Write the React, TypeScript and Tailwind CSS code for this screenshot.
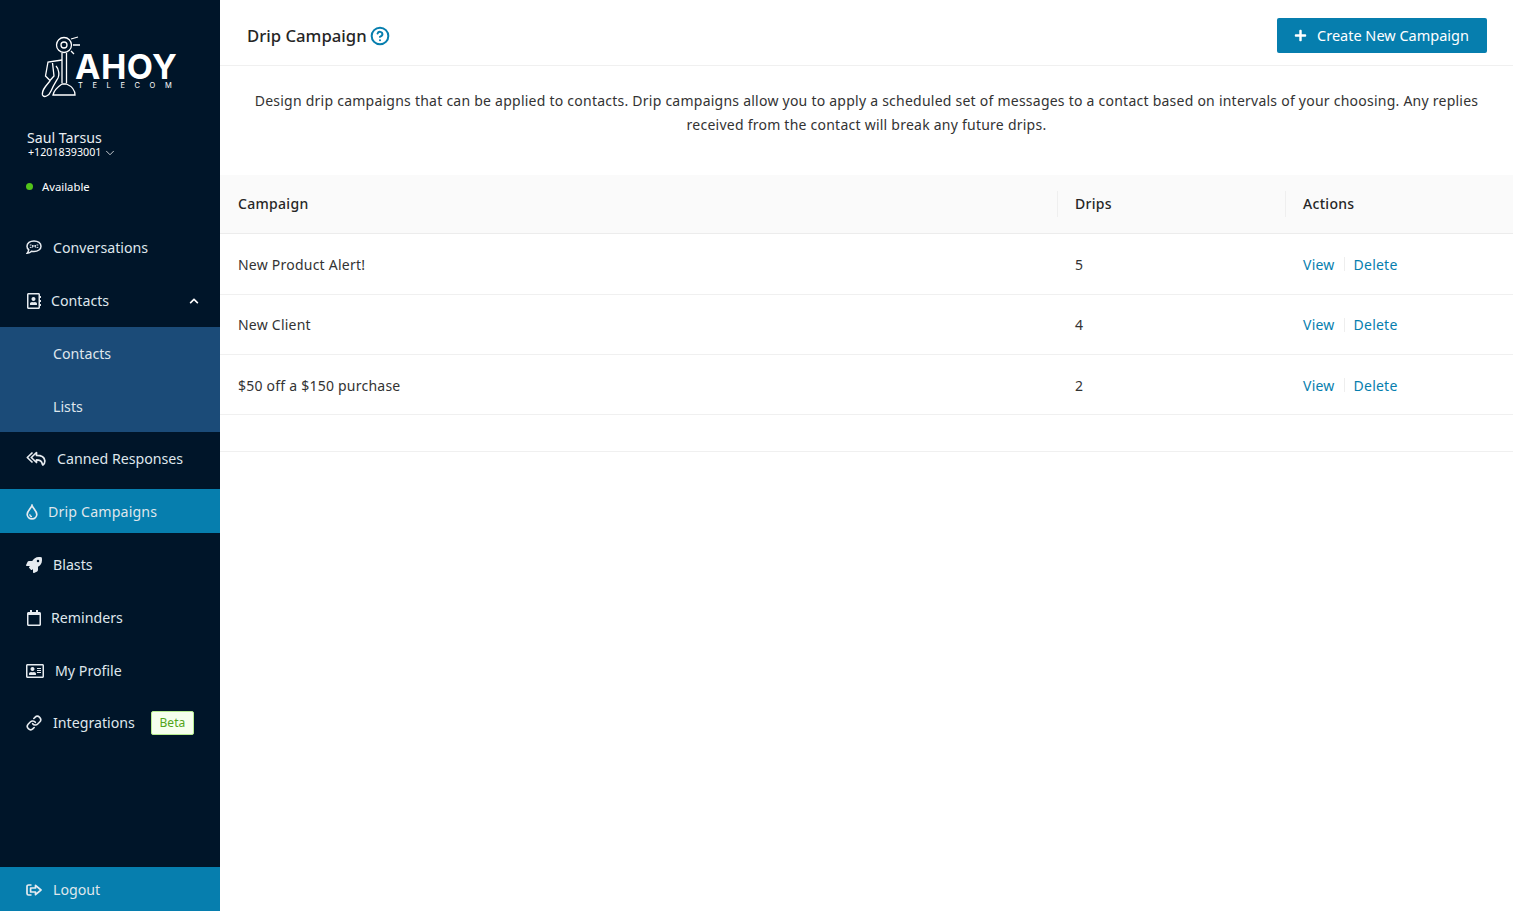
import { ReactNode } from "react";
import {
  FaRegAddressBook,
  FaRocket,
  FaRegCalendar,
  FaRegAddressCard,
  FaChevronUp,
  FaPlus,
} from "react-icons/fa";
import { ChevronDown, CircleHelp, Link } from "lucide-react";

const font = { fontFamily: '"Noto Sans", "Open Sans", sans-serif' };

function SmsIcon() {
  return (
    <svg width="16" height="15" viewBox="0 0 16 15" fill="none" stroke="currentColor">
      <path d="M8 1C4 1 1 3.2 1 6.2C1 7.6 1.6 8.8 2.7 9.7C2.6 11 2 12.2 1.2 13.2C3 13.2 4.6 12.4 5.6 11.3C6.3 11.4 7.1 11.5 8 11.5C12 11.5 15 9.2 15 6.2C15 3.2 12 1 8 1Z" strokeWidth="1.5" />
      <path d="M3.8 5H5.5M3.8 7.4H5.5M6.6 7.6V5L8 6.6L9.4 5V7.6M10.6 5H12.3M10.6 7.4H12.3" strokeWidth="1" />
    </svg>
  );
}

function CannedIcon() {
  return (
    <svg width="20" height="15" viewBox="0 0 20 15" fill="none" stroke="currentColor" strokeWidth="1.7" strokeLinejoin="round">
      <path d="M6.5 1.5L1.3 6.5L6.5 11.5" />
      <path d="M10.5 1.5L5.3 6.5L10.5 11.5V8.8C13.5 8.8 15.5 9.6 16 12C16.2 13 16.5 13.6 17 14C18.3 12.8 19 11.2 18.8 9.6C18.4 6.2 15 4.4 10.5 4.4V1.5Z" />
    </svg>
  );
}

function DropIcon() {
  return (
    <svg width="12" height="16" viewBox="0 0 12 16" fill="none" stroke="currentColor">
      <path d="M6 1.5C6.8 4 10.8 7 10.8 10.3C10.8 13 8.6 14.9 6 14.9C3.4 14.9 1.2 13 1.2 10.3C1.2 7 5.2 4 6 1.5Z" strokeWidth="1.7" />
      <path d="M3.8 10.2C3.8 11.6 4.7 12.6 6 12.7" strokeWidth="1.2" />
    </svg>
  );
}

function LogoutIcon() {
  return (
    <svg width="16" height="12" viewBox="0 0 16 12" fill="none" stroke="currentColor" strokeWidth="1.7">
      <path d="M5.5 1H2.6C1.6 1 1 1.7 1 2.6V9.4C1 10.3 1.6 11 2.6 11H5.5" />
      <path d="M9.5 1.4L15 6L9.5 10.6V8H4.6V4H9.5V1.4Z" strokeLinejoin="round" />
    </svg>
  );
}

function Logo() {
  return (
    <div className="relative h-[70px] w-[140px]">
      <svg className="absolute left-0 top-0" width="46" height="62" viewBox="0 0 46 62" fill="none" stroke="white" strokeWidth="1.3">
        <circle cx="23" cy="9" r="7.5" />
        <circle cx="23" cy="9" r="3" />
        <path d="M21 17V47M25.5 17V47" />
        <path d="M21 24L7 26L4.5 40L9 44.5L13 40L11.5 27" />
        <path d="M9 45C5 50 0.5 54 1.5 59C3 62 8 60 10 55C12 50 14 47 17 42C18.5 39 18 33 15 30" />
        <path d="M12 59C13 54 18 50 21 48H25.5C30 50 34 54 34 59H12Z" />
        <path d="M30 3L37 1M32 9H39M30 15L33 18" />
      </svg>
      <span className="absolute left-[34px] top-[17px] text-[34px] leading-[28px] font-bold tracking-[0.5px] text-white" style={{ fontFamily: "Inter, sans-serif" }}>
        AHOY
      </span>
      <span className="absolute left-[37px] top-[45px] text-[7.5px] leading-[10px] tracking-[9.6px] text-white whitespace-nowrap" style={{ fontFamily: "Inter, sans-serif" }}>
        TELECOM
      </span>
    </div>
  );
}

function NavItem({
  icon,
  label,
  gap,
  extra,
}: {
  icon: ReactNode;
  label: string;
  gap: string;
  extra?: ReactNode;
}) {
  return (
    <div className="flex h-[53px] items-center pl-[26px] pr-[21px] text-[14.2px] text-[#dfe6ec]">
      <span className={`flex items-center text-[#e6ebf0] ${gap}`}>{icon}</span>
      <span>{label}</span>
      {extra}
    </div>
  );
}

function Sidebar() {
  return (
    <aside className="flex h-full w-[220px] shrink-0 flex-col bg-[#001529]">
      <div className="flex justify-center pl-[2px] pt-[36px]">
        <Logo />
      </div>
      <div className="pl-[27px] pt-[24px] text-white">
        <div className="text-[14.2px] leading-[16px] text-[#e8edf1]">Saul Tarsus</div>
        <div className="flex h-[13px] items-center gap-[2px] pl-[1px] text-[10.7px] leading-[13px] text-white">
          +12018393001
          <ChevronDown size={14} strokeWidth={1.3} className="text-white" />
        </div>
      </div>
      <div className="flex items-center pl-[26px] pt-[20px] text-[11.3px] leading-[16px] text-white">
        <span className="mb-[2px] mr-[9px] h-[7px] w-[7px] rounded-full bg-[#52c41a]" />
        Available
      </div>
      <nav className="mt-[26px] flex flex-col">
        <NavItem icon={<SmsIcon />} label="Conversations" gap="mr-[11px]" />
        <NavItem
          icon={<FaRegAddressBook size={16} />}
          label="Contacts"
          gap="mr-[9px]"
          extra={<FaChevronUp size={10} className="ml-auto text-white" />}
        />
        <div className="bg-[#1b4b78]">
          <div className="flex h-[53px] items-center pl-[53px] text-[14.2px] text-[#dfe6ec]">Contacts</div>
          <div className="flex h-[52px] items-center pl-[53px] pt-[1px] text-[14.2px] text-[#dfe6ec]">Lists</div>
        </div>
        <NavItem icon={<CannedIcon />} label="Canned Responses" gap="mr-[11px]" />
        <div className="mt-[4px] mb-[5px] flex h-[44px] items-center bg-[#067eae] pl-[26px] pt-[1px] text-[14.2px] tracking-[0.15px] text-[#dfe6ec]">
          <span className="mr-[10px] flex items-center text-[#e6ebf0]">
            <DropIcon />
          </span>
          Drip Campaigns
        </div>
        <NavItem icon={<FaRocket size={16} />} label="Blasts" gap="mr-[11px]" />
        <NavItem icon={<FaRegCalendar size={16} />} label="Reminders" gap="mr-[9px]" />
        <NavItem icon={<FaRegAddressCard size={18} />} label="My Profile" gap="mr-[11px]" />
        <div className="-mt-px">
          <NavItem
            icon={<Link size={16} strokeWidth={2.4} />}
            label="Integrations"
            gap="mr-[11px]"
            extra={
              <span className="ml-[16px] flex h-[24px] w-[43px] items-center justify-center rounded-[2px] border border-[#b7eb8f] bg-[#f6ffed] text-[12px] text-[#52a41a]">
                Beta
              </span>
            }
          />
        </div>
      </nav>
      <div className="mt-auto flex h-[44px] items-center bg-[#067eae] pl-[26px] pt-[1px] text-[14.2px] text-[#dfe6ec]">
        <span className="mr-[11px] flex items-center text-[#e6ebf0]">
          <LogoutIcon />
        </span>
        Logout
      </div>
    </aside>
  );
}

const rows = [
  { name: "New Product Alert!", drips: 5, h: "h-[61px]", pad: "" },
  { name: "New Client", drips: 4, h: "h-[60px]", pad: "" },
  { name: "$50 off a $150 purchase", drips: 2, h: "h-[60px]", pad: "pt-[1px]" },
];

function App() {
  return (
    <div className="flex h-[911px] w-full overflow-hidden bg-white" style={font}>
      <Sidebar />
      <main className="min-w-0 flex-1">
        <header className="flex h-[66px] items-center justify-between border-b border-[#f0f0f0] pl-[27px] pr-[26px] pt-[6px]">
          <div className="flex items-center gap-[3px] text-[16.7px] font-medium text-[#262626]">
            Drip Campaign
            <CircleHelp size={20} strokeWidth={2.4} className="mt-[2px] text-[#067eae]" />
          </div>
          <button className="flex h-[35px] w-[210px] items-center justify-center gap-[10px] rounded-[2px] bg-[#067eae] pr-[1px] text-[14.5px] text-white">
            <FaPlus size={13} />
            Create New Campaign
          </button>
        </header>
        <p className="px-[27px] pt-[23px] text-center text-[14px] leading-[24px] tracking-[0.24px] text-[#333]">
          Design drip campaigns that can be applied to contacts. Drip campaigns allow you to apply a scheduled set of
          messages to a contact based on intervals of your choosing. Any replies received from the contact will break
          any future drips.
        </p>
        <div className="mt-[38px]">
          <div className="grid h-[59px] grid-cols-[837px_228px_1fr] items-center border-b border-[#ececec] bg-[#fafafa] text-[14px] font-medium tracking-[0.3px] text-[#262626]">
            <div className="pl-[18px] leading-[26px]">Campaign</div>
            <div className="border-l border-[#efefef] pl-[17px] leading-[26px]">Drips</div>
            <div className="border-l border-[#efefef] pl-[17px] leading-[26px]">Actions</div>
          </div>
          {rows.map((row) => (
            <div
              key={row.name}
              className={`grid ${row.h} ${row.pad} grid-cols-[837px_228px_1fr] items-center border-b border-[#f0f0f0] text-[14px] tracking-[0.23px] text-[#333]`}
            >
              <div className="pl-[18px]">{row.name}</div>
              <div className="pl-[18px]">{row.drips}</div>
              <div className="flex items-center pl-[18px] text-[#067eae]">
                <span>View</span>
                <span className="mx-[9px] h-[14px] w-px bg-[#eeeeee]" />
                <span>Delete</span>
              </div>
            </div>
          ))}
          <div className="h-[37px] border-b border-[#f0f0f0]" />
        </div>
      </main>
    </div>
  );
}

export default App;
